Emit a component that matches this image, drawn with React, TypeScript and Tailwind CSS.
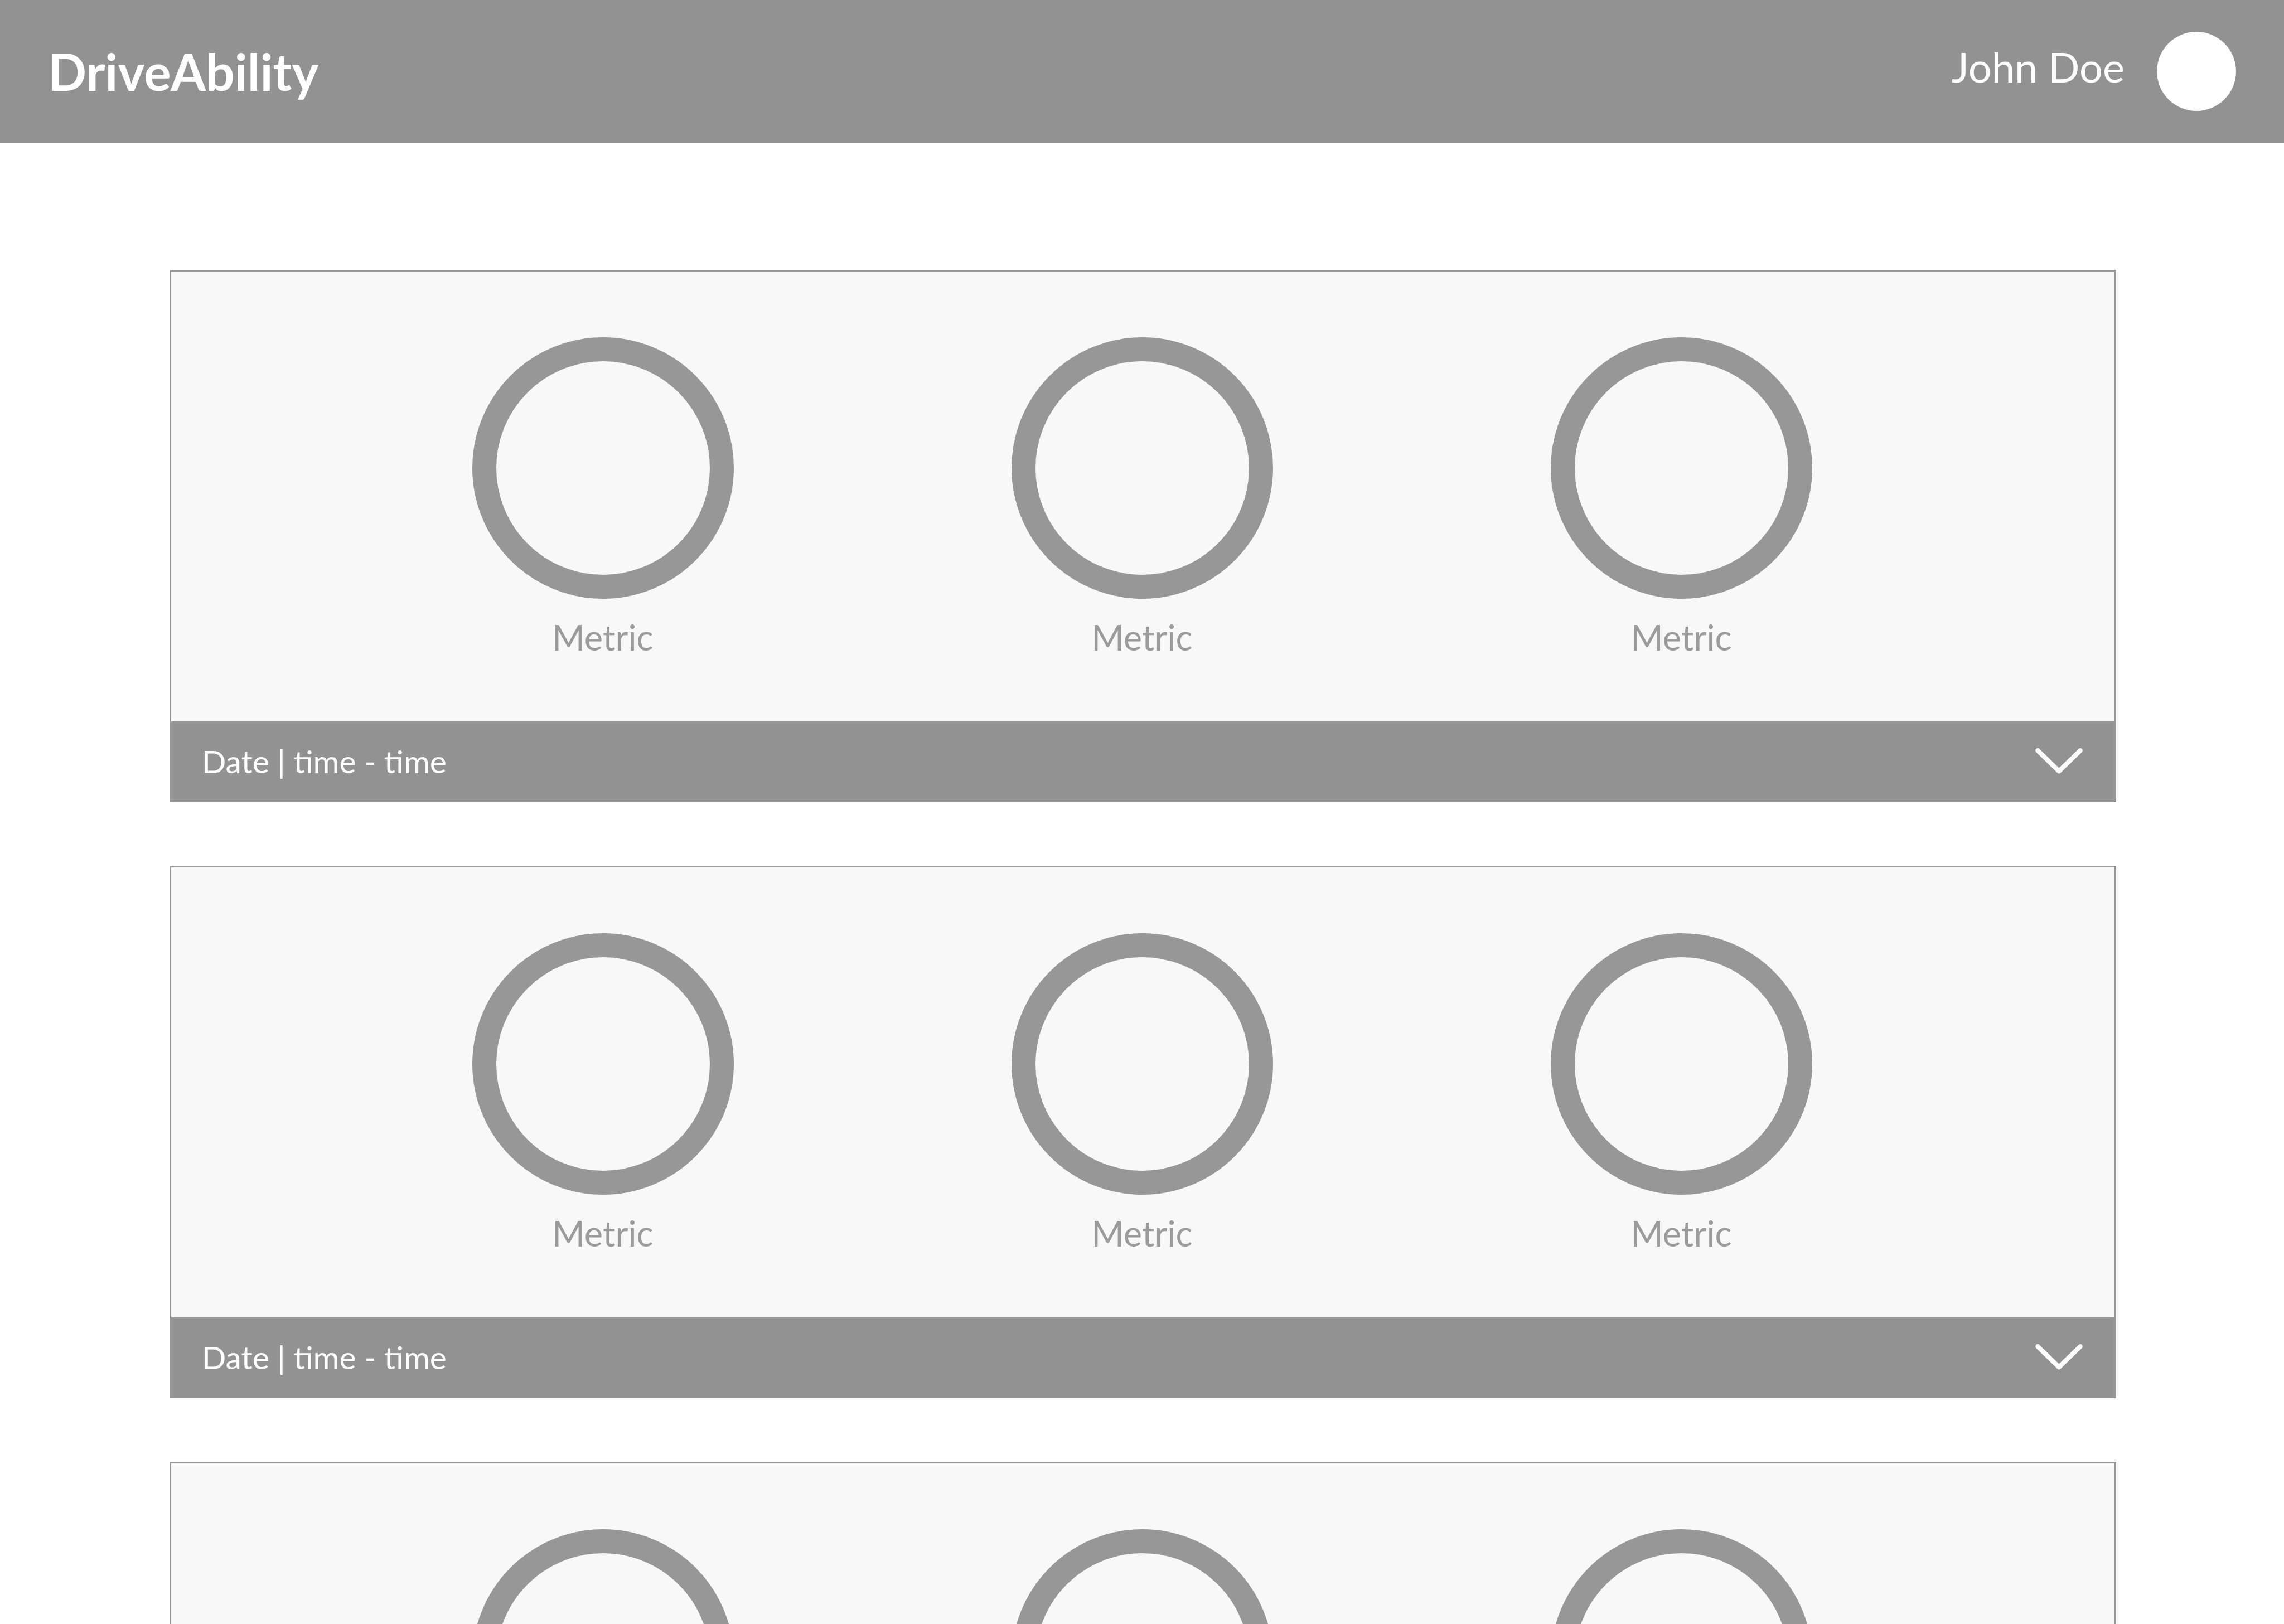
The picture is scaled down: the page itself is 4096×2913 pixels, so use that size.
const METRICS = ['Metric', 'Metric', 'Metric'];

const TRIPS = [
  { id: 1, label: 'Date | time - time' },
  { id: 2, label: 'Date | time - time' },
  { id: 3, label: 'Date | time - time' },
];

function Header() {
  return (
    <header className="flex h-[256px] shrink-0 items-center justify-between bg-[#929292] px-[86px] text-white">
      <h1 className="text-[91px] leading-[112px] font-bold">DriveAbility</h1>
      <div className="flex items-center gap-[58px]">
        <span className="pb-[16px] text-[74px] leading-[88px]">John Doe</span>
        <button type="button" aria-label="Account" className="size-[142px] rounded-full bg-white" />
      </div>
    </header>
  );
}

function Metric({ label }: { label: string }) {
  return (
    <li className="flex w-[469px] flex-col items-center gap-[31px]">
      <div className="size-[469px] rounded-full border-[43px] border-[#979797]" />
      <span className="text-[63px] leading-[76px] text-[#9b9b9b]">{label}</span>
    </li>
  );
}

function TripCard({ label }: { label: string }) {
  return (
    <article className="border-x-[3px] border-t-[3px] border-[#979797] bg-[#f8f8f8]">
      <ul className="flex justify-center gap-[498px] pt-[118px] pr-[3px] pb-[113px]">
        {METRICS.map((metric, i) => (
          <Metric key={i} label={metric} />
        ))}
      </ul>
      <div className="flex h-[145px] items-center justify-between border-[3px] border-[#979797] bg-[#929292] pr-[54px] pb-[4px] pl-[52px] text-white">
        <h2 className="text-[57px] leading-[68px]">{label}</h2>
        <button type="button" aria-label="Show details">
          <svg className="block h-[46px] w-[85px]" viewBox="0 0 90 49" fill="none" aria-hidden="true">
            <path
              d="M4.4 4.5 45 44 85.6 4.5"
              stroke="currentColor"
              strokeWidth="8.8"
              strokeLinecap="round"
              strokeLinejoin="round"
            />
          </svg>
        </button>
      </div>
    </article>
  );
}

export default function App() {
  return (
    <div className="flex h-screen flex-col overflow-hidden bg-white font-['Lato',sans-serif]">
      <Header />
      <main className="flex min-h-0 flex-1 flex-col gap-[114px] overflow-hidden pt-[228px] pr-[301px] pl-[304px]">
        {TRIPS.map((trip) => (
          <TripCard key={trip.id} label={trip.label} />
        ))}
      </main>
    </div>
  );
}
